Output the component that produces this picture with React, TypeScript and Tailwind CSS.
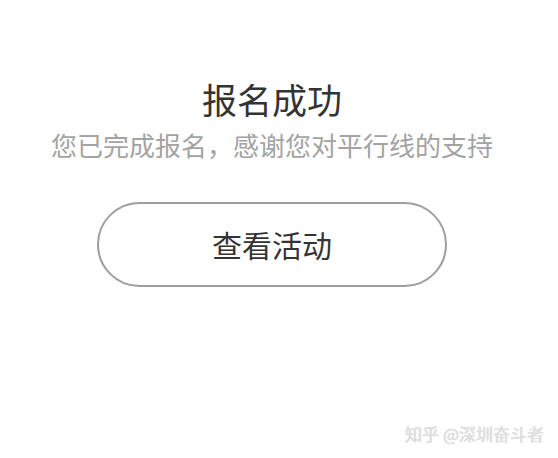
import React from 'react';

export default function App() {
  return (
    <div
      className="relative w-[558px] h-[458px] bg-white overflow-hidden"
      style={{ fontFamily: '"Noto Sans CJK SC", "Noto Sans", sans-serif' }}
    >
      <div className="flex flex-col items-center w-[544px] pt-[79px]">
        <h1 className="text-[35px] leading-[40px] text-[#333333] font-normal">报名成功</h1>
        <p className="mt-[11px] text-[26px] leading-[30px] text-[#a3a3a3]">您已完成报名，感谢您对平行线的支持</p>
        <button className="mt-[42px] w-[350px] h-[85px] rounded-full border-2 border-[#9e9e9e] bg-white text-[30px] text-[#333333] flex items-center justify-center">
          查看活动
        </button>
      </div>
      <div className="absolute right-[14px] bottom-[14px] text-[17px] leading-[20px] text-[#e2e2e2] [text-shadow:0_0_1px_#bdbdbd]">
        知乎 @深圳奋斗者
      </div>
    </div>
  );
}
